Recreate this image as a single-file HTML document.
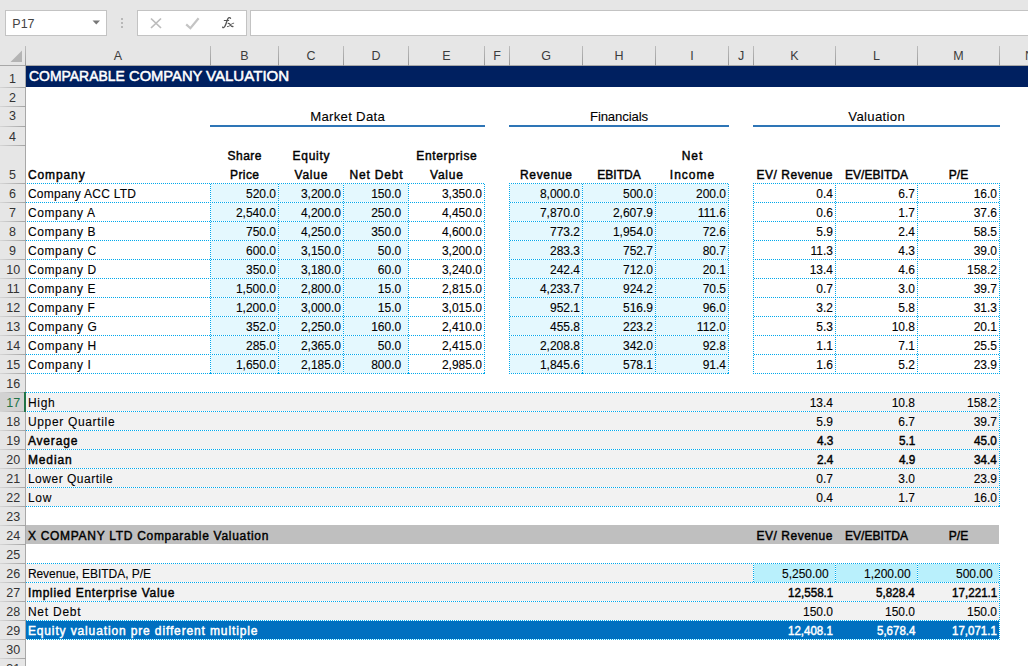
<!DOCTYPE html>
<html lang="en"><head><meta charset="utf-8"><title>Comparable Company Valuation</title>
<style>
html,body{margin:0;padding:0;background:#fff}
body{width:1028px;height:666px;overflow:hidden;position:relative;font-family:"Liberation Sans",sans-serif}
#root{position:absolute;left:0;top:0;width:1028px;height:666px;overflow:hidden}
</style></head><body><div id="root">
<div style="position:absolute;left:0px;top:0px;width:1028px;height:66px;background:#e6e6e6"></div>
<div style="position:absolute;left:5px;top:10px;width:100px;height:24px;background:#fff;border:1px solid #c3c3c3"></div>
<div style="position:absolute;left:137px;top:10px;width:108px;height:24px;background:#fff;border:1px solid #c3c3c3"></div>
<div style="position:absolute;left:250px;top:10px;width:800px;height:24px;background:#fff;border:1px solid #c3c3c3"></div>
<svg style="position:absolute;left:92px;top:20px" width="9" height="6" viewBox="0 0 9 6"><path d="M0.5 0.5 L8 0.5 L4.25 4.6 Z" fill="#777"/></svg>
<div style="position:absolute;left:121px;top:18px;width:2px;height:2px;background:#b8b8b8"></div>
<div style="position:absolute;left:121px;top:22px;width:2px;height:2px;background:#b8b8b8"></div>
<div style="position:absolute;left:121px;top:26px;width:2px;height:2px;background:#b8b8b8"></div>
<svg style="position:absolute;left:150px;top:17px" width="13" height="13" viewBox="0 0 13 13"><path d="M1 1.5 L11 11 M11 1.5 L1 11" stroke="#bcbcbc" stroke-width="1.7" fill="none"/></svg>
<svg style="position:absolute;left:185px;top:17px" width="15" height="13" viewBox="0 0 15 13"><path d="M1.2 7.4 L5.4 11.2 L13.6 1.2" stroke="#c4c4c4" stroke-width="2.2" fill="none"/></svg>
<svg style="position:absolute;left:215px;top:12px" width="25" height="21" viewBox="0 0 25 21"><g fill="none" stroke="#555" stroke-linecap="round"><path d="M15.5 6.3 C15.1 5.4 13.7 5.3 13.0 6.5 C12.3 7.7 11.8 9.4 10.6 12.8 C10.0 14.5 9.4 15.4 8.6 15.6 C8.1 15.7 7.8 15.5 7.7 15.2" stroke-width="1.35"/><path d="M9.3 8.4 L13.7 8.4" stroke-width="1.05"/><path d="M13.3 11.4 C14.4 11.3 14.9 11.9 15.5 13 C16.1 14.1 16.6 14.7 17.9 14.5" stroke-width="1.3"/><path d="M18.7 11.2 C17.6 11.2 16.6 12 15.5 13 C14.4 14 13.6 14.7 12.4 14.6" stroke-width="0.9"/></g></svg>
<div style="position:absolute;left:0px;top:65px;width:1028px;height:1px;background:#a8a8a8"></div>
<div style="position:absolute;left:25px;top:46px;width:1px;height:20px;background:linear-gradient(180deg,#bdbdbd,#999)"></div>
<div style="position:absolute;left:210px;top:46px;width:1px;height:20px;background:linear-gradient(180deg,#bdbdbd,#999)"></div>
<div style="position:absolute;left:278px;top:46px;width:1px;height:20px;background:linear-gradient(180deg,#bdbdbd,#999)"></div>
<div style="position:absolute;left:343px;top:46px;width:1px;height:20px;background:linear-gradient(180deg,#bdbdbd,#999)"></div>
<div style="position:absolute;left:408px;top:46px;width:1px;height:20px;background:linear-gradient(180deg,#bdbdbd,#999)"></div>
<div style="position:absolute;left:484px;top:46px;width:1px;height:20px;background:linear-gradient(180deg,#bdbdbd,#999)"></div>
<div style="position:absolute;left:509px;top:46px;width:1px;height:20px;background:linear-gradient(180deg,#bdbdbd,#999)"></div>
<div style="position:absolute;left:582px;top:46px;width:1px;height:20px;background:linear-gradient(180deg,#bdbdbd,#999)"></div>
<div style="position:absolute;left:655px;top:46px;width:1px;height:20px;background:linear-gradient(180deg,#bdbdbd,#999)"></div>
<div style="position:absolute;left:728px;top:46px;width:1px;height:20px;background:linear-gradient(180deg,#bdbdbd,#999)"></div>
<div style="position:absolute;left:753px;top:46px;width:1px;height:20px;background:linear-gradient(180deg,#bdbdbd,#999)"></div>
<div style="position:absolute;left:835px;top:46px;width:1px;height:20px;background:linear-gradient(180deg,#bdbdbd,#999)"></div>
<div style="position:absolute;left:917px;top:46px;width:1px;height:20px;background:linear-gradient(180deg,#bdbdbd,#999)"></div>
<div style="position:absolute;left:999px;top:46px;width:1px;height:20px;background:linear-gradient(180deg,#bdbdbd,#999)"></div>
<svg style="position:absolute;left:9px;top:49px" width="14" height="14" viewBox="0 0 14 14"><path d="M13 1.5 L13 13 L1.5 13 Z" fill="#b4b4b4"/></svg>
<div style="position:absolute;left:0px;top:66px;width:26px;height:600px;background:#e6e6e6"></div>
<div style="position:absolute;left:25px;top:66px;width:1px;height:600px;background:#a8a8a8"></div>
<div style="position:absolute;left:0;top:87px;width:26px;height:1px;background:linear-gradient(90deg,#d6d6d6,#a2a2a2)"></div>
<div style="position:absolute;left:0;top:106px;width:26px;height:1px;background:linear-gradient(90deg,#d6d6d6,#a2a2a2)"></div>
<div style="position:absolute;left:0;top:126px;width:26px;height:1px;background:linear-gradient(90deg,#d6d6d6,#a2a2a2)"></div>
<div style="position:absolute;left:0;top:145px;width:26px;height:1px;background:linear-gradient(90deg,#d6d6d6,#a2a2a2)"></div>
<div style="position:absolute;left:0;top:183px;width:26px;height:1px;background:linear-gradient(90deg,#d6d6d6,#a2a2a2)"></div>
<div style="position:absolute;left:0;top:202px;width:26px;height:1px;background:linear-gradient(90deg,#d6d6d6,#a2a2a2)"></div>
<div style="position:absolute;left:0;top:221px;width:26px;height:1px;background:linear-gradient(90deg,#d6d6d6,#a2a2a2)"></div>
<div style="position:absolute;left:0;top:240px;width:26px;height:1px;background:linear-gradient(90deg,#d6d6d6,#a2a2a2)"></div>
<div style="position:absolute;left:0;top:259px;width:26px;height:1px;background:linear-gradient(90deg,#d6d6d6,#a2a2a2)"></div>
<div style="position:absolute;left:0;top:278px;width:26px;height:1px;background:linear-gradient(90deg,#d6d6d6,#a2a2a2)"></div>
<div style="position:absolute;left:0;top:297px;width:26px;height:1px;background:linear-gradient(90deg,#d6d6d6,#a2a2a2)"></div>
<div style="position:absolute;left:0;top:316px;width:26px;height:1px;background:linear-gradient(90deg,#d6d6d6,#a2a2a2)"></div>
<div style="position:absolute;left:0;top:335px;width:26px;height:1px;background:linear-gradient(90deg,#d6d6d6,#a2a2a2)"></div>
<div style="position:absolute;left:0;top:354px;width:26px;height:1px;background:linear-gradient(90deg,#d6d6d6,#a2a2a2)"></div>
<div style="position:absolute;left:0;top:373px;width:26px;height:1px;background:linear-gradient(90deg,#d6d6d6,#a2a2a2)"></div>
<div style="position:absolute;left:0;top:392px;width:26px;height:1px;background:linear-gradient(90deg,#d6d6d6,#a2a2a2)"></div>
<div style="position:absolute;left:0;top:411px;width:26px;height:1px;background:linear-gradient(90deg,#d6d6d6,#a2a2a2)"></div>
<div style="position:absolute;left:0;top:430px;width:26px;height:1px;background:linear-gradient(90deg,#d6d6d6,#a2a2a2)"></div>
<div style="position:absolute;left:0;top:449px;width:26px;height:1px;background:linear-gradient(90deg,#d6d6d6,#a2a2a2)"></div>
<div style="position:absolute;left:0;top:468px;width:26px;height:1px;background:linear-gradient(90deg,#d6d6d6,#a2a2a2)"></div>
<div style="position:absolute;left:0;top:487px;width:26px;height:1px;background:linear-gradient(90deg,#d6d6d6,#a2a2a2)"></div>
<div style="position:absolute;left:0;top:506px;width:26px;height:1px;background:linear-gradient(90deg,#d6d6d6,#a2a2a2)"></div>
<div style="position:absolute;left:0;top:525px;width:26px;height:1px;background:linear-gradient(90deg,#d6d6d6,#a2a2a2)"></div>
<div style="position:absolute;left:0;top:544px;width:26px;height:1px;background:linear-gradient(90deg,#d6d6d6,#a2a2a2)"></div>
<div style="position:absolute;left:0;top:563px;width:26px;height:1px;background:linear-gradient(90deg,#d6d6d6,#a2a2a2)"></div>
<div style="position:absolute;left:0;top:582px;width:26px;height:1px;background:linear-gradient(90deg,#d6d6d6,#a2a2a2)"></div>
<div style="position:absolute;left:0;top:601px;width:26px;height:1px;background:linear-gradient(90deg,#d6d6d6,#a2a2a2)"></div>
<div style="position:absolute;left:0;top:620px;width:26px;height:1px;background:linear-gradient(90deg,#d6d6d6,#a2a2a2)"></div>
<div style="position:absolute;left:0;top:639px;width:26px;height:1px;background:linear-gradient(90deg,#d6d6d6,#a2a2a2)"></div>
<div style="position:absolute;left:0;top:658px;width:26px;height:1px;background:linear-gradient(90deg,#d6d6d6,#a2a2a2)"></div>
<div style="position:absolute;left:0px;top:393px;width:24px;height:18px;background:#d2d2d2"></div>
<div style="position:absolute;left:24px;top:392px;width:2px;height:20px;background:#217346"></div>
<div style="position:absolute;left:26px;top:66px;width:1002px;height:600px;background:#fff"></div>
<div style="position:absolute;left:26px;top:66px;width:1002px;height:21px;background:#002060"></div>
<div style="position:absolute;left:210px;top:125px;width:275px;height:2px;background:#2e75b6"></div>
<div style="position:absolute;left:509px;top:125px;width:220px;height:2px;background:#2e75b6"></div>
<div style="position:absolute;left:753px;top:125px;width:247px;height:2px;background:#2e75b6"></div>
<div style="position:absolute;left:210px;top:183px;width:198px;height:190px;background:#e4f8fe"></div>
<div style="position:absolute;left:509px;top:183px;width:219px;height:190px;background:#e4f8fe"></div>
<div style="position:absolute;left:26px;top:183px;width:459px;height:1px;background:repeating-linear-gradient(90deg,#00a8ec 0 1px,#fff 1px 2px);background-position:-1px 0"></div>
<div style="position:absolute;left:509px;top:183px;width:220px;height:1px;background:repeating-linear-gradient(90deg,#00a8ec 0 1px,#fff 1px 2px);background-position:0px 0"></div>
<div style="position:absolute;left:753px;top:183px;width:247px;height:1px;background:repeating-linear-gradient(90deg,#00a8ec 0 1px,#fff 1px 2px);background-position:0px 0"></div>
<div style="position:absolute;left:26px;top:202px;width:459px;height:1px;background:repeating-linear-gradient(90deg,#00a8ec 0 1px,#fff 1px 2px);background-position:0px 0"></div>
<div style="position:absolute;left:509px;top:202px;width:220px;height:1px;background:repeating-linear-gradient(90deg,#00a8ec 0 1px,#fff 1px 2px);background-position:-1px 0"></div>
<div style="position:absolute;left:753px;top:202px;width:247px;height:1px;background:repeating-linear-gradient(90deg,#00a8ec 0 1px,#fff 1px 2px);background-position:-1px 0"></div>
<div style="position:absolute;left:26px;top:221px;width:459px;height:1px;background:repeating-linear-gradient(90deg,#00a8ec 0 1px,#fff 1px 2px);background-position:-1px 0"></div>
<div style="position:absolute;left:509px;top:221px;width:220px;height:1px;background:repeating-linear-gradient(90deg,#00a8ec 0 1px,#fff 1px 2px);background-position:0px 0"></div>
<div style="position:absolute;left:753px;top:221px;width:247px;height:1px;background:repeating-linear-gradient(90deg,#00a8ec 0 1px,#fff 1px 2px);background-position:0px 0"></div>
<div style="position:absolute;left:26px;top:240px;width:459px;height:1px;background:repeating-linear-gradient(90deg,#00a8ec 0 1px,#fff 1px 2px);background-position:0px 0"></div>
<div style="position:absolute;left:509px;top:240px;width:220px;height:1px;background:repeating-linear-gradient(90deg,#00a8ec 0 1px,#fff 1px 2px);background-position:-1px 0"></div>
<div style="position:absolute;left:753px;top:240px;width:247px;height:1px;background:repeating-linear-gradient(90deg,#00a8ec 0 1px,#fff 1px 2px);background-position:-1px 0"></div>
<div style="position:absolute;left:26px;top:259px;width:459px;height:1px;background:repeating-linear-gradient(90deg,#00a8ec 0 1px,#fff 1px 2px);background-position:-1px 0"></div>
<div style="position:absolute;left:509px;top:259px;width:220px;height:1px;background:repeating-linear-gradient(90deg,#00a8ec 0 1px,#fff 1px 2px);background-position:0px 0"></div>
<div style="position:absolute;left:753px;top:259px;width:247px;height:1px;background:repeating-linear-gradient(90deg,#00a8ec 0 1px,#fff 1px 2px);background-position:0px 0"></div>
<div style="position:absolute;left:26px;top:278px;width:459px;height:1px;background:repeating-linear-gradient(90deg,#00a8ec 0 1px,#fff 1px 2px);background-position:0px 0"></div>
<div style="position:absolute;left:509px;top:278px;width:220px;height:1px;background:repeating-linear-gradient(90deg,#00a8ec 0 1px,#fff 1px 2px);background-position:-1px 0"></div>
<div style="position:absolute;left:753px;top:278px;width:247px;height:1px;background:repeating-linear-gradient(90deg,#00a8ec 0 1px,#fff 1px 2px);background-position:-1px 0"></div>
<div style="position:absolute;left:26px;top:297px;width:459px;height:1px;background:repeating-linear-gradient(90deg,#00a8ec 0 1px,#fff 1px 2px);background-position:-1px 0"></div>
<div style="position:absolute;left:509px;top:297px;width:220px;height:1px;background:repeating-linear-gradient(90deg,#00a8ec 0 1px,#fff 1px 2px);background-position:0px 0"></div>
<div style="position:absolute;left:753px;top:297px;width:247px;height:1px;background:repeating-linear-gradient(90deg,#00a8ec 0 1px,#fff 1px 2px);background-position:0px 0"></div>
<div style="position:absolute;left:26px;top:316px;width:459px;height:1px;background:repeating-linear-gradient(90deg,#00a8ec 0 1px,#fff 1px 2px);background-position:0px 0"></div>
<div style="position:absolute;left:509px;top:316px;width:220px;height:1px;background:repeating-linear-gradient(90deg,#00a8ec 0 1px,#fff 1px 2px);background-position:-1px 0"></div>
<div style="position:absolute;left:753px;top:316px;width:247px;height:1px;background:repeating-linear-gradient(90deg,#00a8ec 0 1px,#fff 1px 2px);background-position:-1px 0"></div>
<div style="position:absolute;left:26px;top:335px;width:459px;height:1px;background:repeating-linear-gradient(90deg,#00a8ec 0 1px,#fff 1px 2px);background-position:-1px 0"></div>
<div style="position:absolute;left:509px;top:335px;width:220px;height:1px;background:repeating-linear-gradient(90deg,#00a8ec 0 1px,#fff 1px 2px);background-position:0px 0"></div>
<div style="position:absolute;left:753px;top:335px;width:247px;height:1px;background:repeating-linear-gradient(90deg,#00a8ec 0 1px,#fff 1px 2px);background-position:0px 0"></div>
<div style="position:absolute;left:26px;top:354px;width:459px;height:1px;background:repeating-linear-gradient(90deg,#00a8ec 0 1px,#fff 1px 2px);background-position:0px 0"></div>
<div style="position:absolute;left:509px;top:354px;width:220px;height:1px;background:repeating-linear-gradient(90deg,#00a8ec 0 1px,#fff 1px 2px);background-position:-1px 0"></div>
<div style="position:absolute;left:753px;top:354px;width:247px;height:1px;background:repeating-linear-gradient(90deg,#00a8ec 0 1px,#fff 1px 2px);background-position:-1px 0"></div>
<div style="position:absolute;left:26px;top:373px;width:459px;height:1px;background:repeating-linear-gradient(90deg,#00a8ec 0 1px,#fff 1px 2px);background-position:-1px 0"></div>
<div style="position:absolute;left:509px;top:373px;width:220px;height:1px;background:repeating-linear-gradient(90deg,#00a8ec 0 1px,#fff 1px 2px);background-position:0px 0"></div>
<div style="position:absolute;left:753px;top:373px;width:247px;height:1px;background:repeating-linear-gradient(90deg,#00a8ec 0 1px,#fff 1px 2px);background-position:0px 0"></div>
<div style="position:absolute;left:210px;top:183px;width:1px;height:191px;background:repeating-linear-gradient(180deg,#00a8ec 0 1px,#fff 1px 2px);background-position:0 -1px"></div>
<div style="position:absolute;left:278px;top:183px;width:1px;height:191px;background:repeating-linear-gradient(180deg,#00a8ec 0 1px,#fff 1px 2px);background-position:0 -1px"></div>
<div style="position:absolute;left:343px;top:183px;width:1px;height:191px;background:repeating-linear-gradient(180deg,#00a8ec 0 1px,#fff 1px 2px);background-position:0 0px"></div>
<div style="position:absolute;left:408px;top:183px;width:1px;height:191px;background:repeating-linear-gradient(180deg,#00a8ec 0 1px,#fff 1px 2px);background-position:0 -1px"></div>
<div style="position:absolute;left:484px;top:183px;width:1px;height:191px;background:repeating-linear-gradient(180deg,#00a8ec 0 1px,#fff 1px 2px);background-position:0 -1px"></div>
<div style="position:absolute;left:509px;top:183px;width:1px;height:191px;background:repeating-linear-gradient(180deg,#00a8ec 0 1px,#fff 1px 2px);background-position:0 0px"></div>
<div style="position:absolute;left:582px;top:183px;width:1px;height:191px;background:repeating-linear-gradient(180deg,#00a8ec 0 1px,#fff 1px 2px);background-position:0 -1px"></div>
<div style="position:absolute;left:655px;top:183px;width:1px;height:191px;background:repeating-linear-gradient(180deg,#00a8ec 0 1px,#fff 1px 2px);background-position:0 0px"></div>
<div style="position:absolute;left:728px;top:183px;width:1px;height:191px;background:repeating-linear-gradient(180deg,#00a8ec 0 1px,#fff 1px 2px);background-position:0 -1px"></div>
<div style="position:absolute;left:753px;top:183px;width:1px;height:191px;background:repeating-linear-gradient(180deg,#00a8ec 0 1px,#fff 1px 2px);background-position:0 0px"></div>
<div style="position:absolute;left:835px;top:183px;width:1px;height:191px;background:repeating-linear-gradient(180deg,#00a8ec 0 1px,#fff 1px 2px);background-position:0 0px"></div>
<div style="position:absolute;left:917px;top:183px;width:1px;height:191px;background:repeating-linear-gradient(180deg,#00a8ec 0 1px,#fff 1px 2px);background-position:0 0px"></div>
<div style="position:absolute;left:999px;top:183px;width:1px;height:191px;background:repeating-linear-gradient(180deg,#00a8ec 0 1px,#fff 1px 2px);background-position:0 0px"></div>
<div style="position:absolute;left:26px;top:392px;width:973px;height:114px;background:#f2f2f2"></div>
<div style="position:absolute;left:26px;top:392px;width:974px;height:1px;background:repeating-linear-gradient(90deg,#00a8ec 0 1px,#fff 1px 2px);background-position:0px 0"></div>
<div style="position:absolute;left:26px;top:411px;width:974px;height:1px;background:repeating-linear-gradient(90deg,#00a8ec 0 1px,#fff 1px 2px);background-position:-1px 0"></div>
<div style="position:absolute;left:26px;top:430px;width:974px;height:1px;background:repeating-linear-gradient(90deg,#00a8ec 0 1px,#fff 1px 2px);background-position:0px 0"></div>
<div style="position:absolute;left:26px;top:449px;width:974px;height:1px;background:repeating-linear-gradient(90deg,#00a8ec 0 1px,#fff 1px 2px);background-position:-1px 0"></div>
<div style="position:absolute;left:26px;top:468px;width:974px;height:1px;background:repeating-linear-gradient(90deg,#00a8ec 0 1px,#fff 1px 2px);background-position:0px 0"></div>
<div style="position:absolute;left:26px;top:487px;width:974px;height:1px;background:repeating-linear-gradient(90deg,#00a8ec 0 1px,#fff 1px 2px);background-position:-1px 0"></div>
<div style="position:absolute;left:26px;top:506px;width:974px;height:1px;background:repeating-linear-gradient(90deg,#00a8ec 0 1px,#fff 1px 2px);background-position:0px 0"></div>
<div style="position:absolute;left:999px;top:392px;width:1px;height:115px;background:repeating-linear-gradient(180deg,#00a8ec 0 1px,#fff 1px 2px);background-position:0 -1px"></div>
<div style="position:absolute;left:26px;top:525px;width:973px;height:19px;background:#bfbfbf"></div>
<div style="position:absolute;left:26px;top:563px;width:973px;height:57px;background:#f2f2f2"></div>
<div style="position:absolute;left:753px;top:563px;width:246px;height:19px;background:#b9f0fc"></div>
<div style="position:absolute;left:26px;top:620px;width:973px;height:19px;background:#0070c0"></div>
<div style="position:absolute;left:26px;top:563px;width:974px;height:1px;background:repeating-linear-gradient(90deg,#00a8ec 0 1px,#fff 1px 2px);background-position:-1px 0"></div>
<div style="position:absolute;left:26px;top:582px;width:974px;height:1px;background:repeating-linear-gradient(90deg,#00a8ec 0 1px,#fff 1px 2px);background-position:0px 0"></div>
<div style="position:absolute;left:26px;top:601px;width:974px;height:1px;background:repeating-linear-gradient(90deg,#00a8ec 0 1px,#fff 1px 2px);background-position:-1px 0"></div>
<div style="position:absolute;left:26px;top:620px;width:974px;height:1px;background:repeating-linear-gradient(90deg,#00a8ec 0 1px,#fff 1px 2px);background-position:0px 0"></div>
<div style="position:absolute;left:26px;top:639px;width:974px;height:1px;background:repeating-linear-gradient(90deg,#00a8ec 0 1px,#fff 1px 2px);background-position:-1px 0"></div>
<div style="position:absolute;left:999px;top:563px;width:1px;height:77px;background:repeating-linear-gradient(180deg,#00a8ec 0 1px,#fff 1px 2px);background-position:0 0px"></div>
<div style="position:absolute;left:753px;top:563px;width:1px;height:20px;background:repeating-linear-gradient(180deg,#00a8ec 0 1px,#fff 1px 2px);background-position:0 0px"></div>
<div style="position:absolute;left:835px;top:563px;width:1px;height:20px;background:repeating-linear-gradient(180deg,#00a8ec 0 1px,#fff 1px 2px);background-position:0 0px"></div>
<div style="position:absolute;left:917px;top:563px;width:1px;height:20px;background:repeating-linear-gradient(180deg,#00a8ec 0 1px,#fff 1px 2px);background-position:0 0px"></div>
<div style="font-family:'Liberation Sans',sans-serif;font-size:12.5px;white-space:pre;position:absolute;left:12.30px;top:13.87px;line-height:20px;color:#444;">P17</div>
<div style="font-family:'Liberation Sans',sans-serif;font-size:12.5px;white-space:pre;position:absolute;left:113.83px;top:46.17px;line-height:20px;color:#3c3c3c;">A</div>
<div style="font-family:'Liberation Sans',sans-serif;font-size:12.5px;white-space:pre;position:absolute;left:240.33px;top:46.17px;line-height:20px;color:#3c3c3c;">B</div>
<div style="font-family:'Liberation Sans',sans-serif;font-size:12.5px;white-space:pre;position:absolute;left:306.48px;top:46.17px;line-height:20px;color:#3c3c3c;">C</div>
<div style="font-family:'Liberation Sans',sans-serif;font-size:12.5px;white-space:pre;position:absolute;left:371.48px;top:46.17px;line-height:20px;color:#3c3c3c;">D</div>
<div style="font-family:'Liberation Sans',sans-serif;font-size:12.5px;white-space:pre;position:absolute;left:442.33px;top:46.17px;line-height:20px;color:#3c3c3c;">E</div>
<div style="font-family:'Liberation Sans',sans-serif;font-size:12.5px;white-space:pre;position:absolute;left:493.18px;top:46.17px;line-height:20px;color:#3c3c3c;">F</div>
<div style="font-family:'Liberation Sans',sans-serif;font-size:12.5px;white-space:pre;position:absolute;left:541.13px;top:46.17px;line-height:20px;color:#3c3c3c;">G</div>
<div style="font-family:'Liberation Sans',sans-serif;font-size:12.5px;white-space:pre;position:absolute;left:614.48px;top:46.17px;line-height:20px;color:#3c3c3c;">H</div>
<div style="font-family:'Liberation Sans',sans-serif;font-size:12.5px;white-space:pre;position:absolute;left:690.26px;top:46.17px;line-height:20px;color:#3c3c3c;">I</div>
<div style="font-family:'Liberation Sans',sans-serif;font-size:12.5px;white-space:pre;position:absolute;left:737.88px;top:46.17px;line-height:20px;color:#3c3c3c;">J</div>
<div style="font-family:'Liberation Sans',sans-serif;font-size:12.5px;white-space:pre;position:absolute;left:790.33px;top:46.17px;line-height:20px;color:#3c3c3c;">K</div>
<div style="font-family:'Liberation Sans',sans-serif;font-size:12.5px;white-space:pre;position:absolute;left:873.02px;top:46.17px;line-height:20px;color:#3c3c3c;">L</div>
<div style="font-family:'Liberation Sans',sans-serif;font-size:12.5px;white-space:pre;position:absolute;left:953.29px;top:46.17px;line-height:20px;color:#3c3c3c;">M</div>
<div style="font-family:'Liberation Sans',sans-serif;font-size:12.5px;white-space:pre;position:absolute;left:1024.98px;top:46.17px;line-height:20px;color:#3c3c3c;">N</div>
<div style="font-family:'Liberation Sans',sans-serif;font-size:12.5px;white-space:pre;position:absolute;left:8.92px;top:69.07px;line-height:20px;color:#333;">1</div>
<div style="font-family:'Liberation Sans',sans-serif;font-size:12.5px;white-space:pre;position:absolute;left:8.92px;top:88.07px;line-height:20px;color:#333;">2</div>
<div style="font-family:'Liberation Sans',sans-serif;font-size:12.5px;white-space:pre;position:absolute;left:8.92px;top:106.27px;line-height:20px;color:#333;">3</div>
<div style="font-family:'Liberation Sans',sans-serif;font-size:12.5px;white-space:pre;position:absolute;left:8.92px;top:127.07px;line-height:20px;color:#333;">4</div>
<div style="font-family:'Liberation Sans',sans-serif;font-size:12.5px;white-space:pre;position:absolute;left:8.92px;top:165.07px;line-height:20px;color:#333;">5</div>
<div style="font-family:'Liberation Sans',sans-serif;font-size:12.5px;white-space:pre;position:absolute;left:8.92px;top:184.07px;line-height:20px;color:#333;">6</div>
<div style="font-family:'Liberation Sans',sans-serif;font-size:12.5px;white-space:pre;position:absolute;left:8.92px;top:203.07px;line-height:20px;color:#333;">7</div>
<div style="font-family:'Liberation Sans',sans-serif;font-size:12.5px;white-space:pre;position:absolute;left:8.92px;top:222.07px;line-height:20px;color:#333;">8</div>
<div style="font-family:'Liberation Sans',sans-serif;font-size:12.5px;white-space:pre;position:absolute;left:8.92px;top:241.07px;line-height:20px;color:#333;">9</div>
<div style="font-family:'Liberation Sans',sans-serif;font-size:12.5px;white-space:pre;position:absolute;left:6.35px;top:260.07px;line-height:20px;color:#333;">10</div>
<div style="font-family:'Liberation Sans',sans-serif;font-size:12.5px;white-space:pre;position:absolute;left:6.81px;top:279.07px;line-height:20px;color:#333;">11</div>
<div style="font-family:'Liberation Sans',sans-serif;font-size:12.5px;white-space:pre;position:absolute;left:6.35px;top:298.07px;line-height:20px;color:#333;">12</div>
<div style="font-family:'Liberation Sans',sans-serif;font-size:12.5px;white-space:pre;position:absolute;left:6.35px;top:317.07px;line-height:20px;color:#333;">13</div>
<div style="font-family:'Liberation Sans',sans-serif;font-size:12.5px;white-space:pre;position:absolute;left:6.35px;top:336.07px;line-height:20px;color:#333;">14</div>
<div style="font-family:'Liberation Sans',sans-serif;font-size:12.5px;white-space:pre;position:absolute;left:6.35px;top:355.07px;line-height:20px;color:#333;">15</div>
<div style="font-family:'Liberation Sans',sans-serif;font-size:12.5px;white-space:pre;position:absolute;left:6.35px;top:374.07px;line-height:20px;color:#333;">16</div>
<div style="font-family:'Liberation Sans',sans-serif;font-size:12.5px;white-space:pre;position:absolute;left:6.35px;top:393.07px;line-height:20px;color:#217346;">17</div>
<div style="font-family:'Liberation Sans',sans-serif;font-size:12.5px;white-space:pre;position:absolute;left:6.35px;top:412.07px;line-height:20px;color:#333;">18</div>
<div style="font-family:'Liberation Sans',sans-serif;font-size:12.5px;white-space:pre;position:absolute;left:6.35px;top:431.07px;line-height:20px;color:#333;">19</div>
<div style="font-family:'Liberation Sans',sans-serif;font-size:12.5px;white-space:pre;position:absolute;left:6.35px;top:450.07px;line-height:20px;color:#333;">20</div>
<div style="font-family:'Liberation Sans',sans-serif;font-size:12.5px;white-space:pre;position:absolute;left:6.35px;top:469.07px;line-height:20px;color:#333;">21</div>
<div style="font-family:'Liberation Sans',sans-serif;font-size:12.5px;white-space:pre;position:absolute;left:6.35px;top:488.07px;line-height:20px;color:#333;">22</div>
<div style="font-family:'Liberation Sans',sans-serif;font-size:12.5px;white-space:pre;position:absolute;left:6.35px;top:507.07px;line-height:20px;color:#333;">23</div>
<div style="font-family:'Liberation Sans',sans-serif;font-size:12.5px;white-space:pre;position:absolute;left:6.35px;top:526.07px;line-height:20px;color:#333;">24</div>
<div style="font-family:'Liberation Sans',sans-serif;font-size:12.5px;white-space:pre;position:absolute;left:6.35px;top:545.07px;line-height:20px;color:#333;">25</div>
<div style="font-family:'Liberation Sans',sans-serif;font-size:12.5px;white-space:pre;position:absolute;left:6.35px;top:564.07px;line-height:20px;color:#333;">26</div>
<div style="font-family:'Liberation Sans',sans-serif;font-size:12.5px;white-space:pre;position:absolute;left:6.35px;top:583.07px;line-height:20px;color:#333;">27</div>
<div style="font-family:'Liberation Sans',sans-serif;font-size:12.5px;white-space:pre;position:absolute;left:6.35px;top:602.07px;line-height:20px;color:#333;">28</div>
<div style="font-family:'Liberation Sans',sans-serif;font-size:12.5px;white-space:pre;position:absolute;left:6.35px;top:621.07px;line-height:20px;color:#333;">29</div>
<div style="font-family:'Liberation Sans',sans-serif;font-size:12.5px;white-space:pre;position:absolute;left:6.35px;top:640.07px;line-height:20px;color:#333;">30</div>
<div style="font-family:'Liberation Sans',sans-serif;font-size:12.5px;white-space:pre;position:absolute;left:6.35px;top:659.07px;line-height:20px;color:#333;">31</div>
<div style="font-family:'Liberation Sans',sans-serif;font-size:14.5px;white-space:pre;position:absolute;left:29.20px;top:66.48px;line-height:20px;color:#fff;transform:scaleX(0.9613);transform-origin:0 0;-webkit-text-stroke:0.5px #fff;">COMPARABLE</div>
<div style="font-family:'Liberation Sans',sans-serif;font-size:14.5px;white-space:pre;position:absolute;left:128.80px;top:66.48px;line-height:20px;color:#fff;transform:scaleX(1.0159);transform-origin:0 0;-webkit-text-stroke:0.5px #fff;">COMPANY</div>
<div style="font-family:'Liberation Sans',sans-serif;font-size:14.5px;white-space:pre;position:absolute;left:206.20px;top:66.48px;line-height:20px;color:#fff;transform:scaleX(1.0394);transform-origin:0 0;-webkit-text-stroke:0.5px #fff;">VALUATION</div>
<div style="font-family:'Liberation Sans',sans-serif;font-size:13.2px;white-space:pre;position:absolute;left:310.14px;top:106.63px;line-height:20px;color:#000;letter-spacing:0.288px;-webkit-text-stroke:0.1px #000;">Market Data</div>
<div style="font-family:'Liberation Sans',sans-serif;font-size:13.2px;white-space:pre;position:absolute;left:589.98px;top:106.63px;line-height:20px;color:#000;letter-spacing:-0.148px;-webkit-text-stroke:0.1px #000;">Financials</div>
<div style="font-family:'Liberation Sans',sans-serif;font-size:13.2px;white-space:pre;position:absolute;left:848.25px;top:106.63px;line-height:20px;color:#000;letter-spacing:0.309px;-webkit-text-stroke:0.1px #000;">Valuation</div>
<div style="font-family:'Liberation Sans',sans-serif;font-size:12.0px;white-space:pre;position:absolute;left:27.90px;top:165.34px;line-height:20px;color:#000;letter-spacing:0.906px;-webkit-text-stroke:0.42px #000;">Company</div>
<div style="font-family:'Liberation Sans',sans-serif;font-size:12.0px;white-space:pre;position:absolute;left:227.46px;top:146.34px;line-height:20px;color:#000;letter-spacing:0.514px;-webkit-text-stroke:0.42px #000;">Share</div>
<div style="font-family:'Liberation Sans',sans-serif;font-size:12.0px;white-space:pre;position:absolute;left:230.05px;top:165.34px;line-height:20px;color:#000;letter-spacing:0.391px;-webkit-text-stroke:0.42px #000;">Price</div>
<div style="font-family:'Liberation Sans',sans-serif;font-size:12.0px;white-space:pre;position:absolute;left:292.47px;top:146.34px;line-height:20px;color:#000;letter-spacing:0.740px;-webkit-text-stroke:0.42px #000;">Equity</div>
<div style="font-family:'Liberation Sans',sans-serif;font-size:12.0px;white-space:pre;position:absolute;left:294.54px;top:165.34px;line-height:20px;color:#000;letter-spacing:0.778px;-webkit-text-stroke:0.42px #000;">Value</div>
<div style="font-family:'Liberation Sans',sans-serif;font-size:12.0px;white-space:pre;position:absolute;left:349.42px;top:165.34px;line-height:20px;color:#000;letter-spacing:0.830px;-webkit-text-stroke:0.42px #000;">Net Debt</div>
<div style="font-family:'Liberation Sans',sans-serif;font-size:12.0px;white-space:pre;position:absolute;left:416.27px;top:146.34px;line-height:20px;color:#000;letter-spacing:0.640px;-webkit-text-stroke:0.42px #000;">Enterprise</div>
<div style="font-family:'Liberation Sans',sans-serif;font-size:12.0px;white-space:pre;position:absolute;left:430.04px;top:165.34px;line-height:20px;color:#000;letter-spacing:0.778px;-webkit-text-stroke:0.42px #000;">Value</div>
<div style="font-family:'Liberation Sans',sans-serif;font-size:12.0px;white-space:pre;position:absolute;left:519.94px;top:165.34px;line-height:20px;color:#000;letter-spacing:0.679px;-webkit-text-stroke:0.42px #000;">Revenue</div>
<div style="font-family:'Liberation Sans',sans-serif;font-size:12.0px;white-space:pre;position:absolute;left:597.26px;top:165.34px;line-height:20px;color:#000;letter-spacing:0.026px;-webkit-text-stroke:0.42px #000;">EBITDA</div>
<div style="font-family:'Liberation Sans',sans-serif;font-size:12.0px;white-space:pre;position:absolute;left:681.65px;top:146.34px;line-height:20px;color:#000;letter-spacing:1.004px;-webkit-text-stroke:0.42px #000;">Net</div>
<div style="font-family:'Liberation Sans',sans-serif;font-size:12.0px;white-space:pre;position:absolute;left:669.85px;top:165.34px;line-height:20px;color:#000;letter-spacing:0.990px;-webkit-text-stroke:0.42px #000;">Income</div>
<div style="font-family:'Liberation Sans',sans-serif;font-size:12.0px;white-space:pre;position:absolute;left:756.60px;top:165.34px;line-height:20px;color:#000;letter-spacing:0.507px;-webkit-text-stroke:0.42px #000;">EV/ Revenue</div>
<div style="font-family:'Liberation Sans',sans-serif;font-size:12.0px;white-space:pre;position:absolute;left:844.88px;top:165.34px;line-height:20px;color:#000;letter-spacing:0.068px;-webkit-text-stroke:0.42px #000;">EV/EBITDA</div>
<div style="font-family:'Liberation Sans',sans-serif;font-size:12.0px;white-space:pre;position:absolute;left:948.68px;top:165.34px;line-height:20px;color:#000;letter-spacing:0.152px;-webkit-text-stroke:0.42px #000;">P/E</div>
<div style="font-family:'Liberation Sans',sans-serif;font-size:12.0px;white-space:pre;position:absolute;left:27.90px;top:184.34px;line-height:20px;color:#000;letter-spacing:0.260px;-webkit-text-stroke:0.1px #000;">Company ACC LTD</div>
<div style="font-family:'Liberation Sans',sans-serif;font-size:12.0px;white-space:pre;position:absolute;left:245.97px;top:184.34px;line-height:20px;color:#000;-webkit-text-stroke:0.1px #000;">520.0</div>
<div style="font-family:'Liberation Sans',sans-serif;font-size:12.0px;white-space:pre;position:absolute;left:300.95px;top:184.34px;line-height:20px;color:#000;-webkit-text-stroke:0.1px #000;">3,200.0</div>
<div style="font-family:'Liberation Sans',sans-serif;font-size:12.0px;white-space:pre;position:absolute;left:371.17px;top:184.34px;line-height:20px;color:#000;-webkit-text-stroke:0.1px #000;">150.0</div>
<div style="font-family:'Liberation Sans',sans-serif;font-size:12.0px;white-space:pre;position:absolute;left:441.95px;top:184.34px;line-height:20px;color:#000;-webkit-text-stroke:0.1px #000;">3,350.0</div>
<div style="font-family:'Liberation Sans',sans-serif;font-size:12.0px;white-space:pre;position:absolute;left:539.95px;top:184.34px;line-height:20px;color:#000;-webkit-text-stroke:0.1px #000;">8,000.0</div>
<div style="font-family:'Liberation Sans',sans-serif;font-size:12.0px;white-space:pre;position:absolute;left:622.97px;top:184.34px;line-height:20px;color:#000;-webkit-text-stroke:0.1px #000;">500.0</div>
<div style="font-family:'Liberation Sans',sans-serif;font-size:12.0px;white-space:pre;position:absolute;left:695.97px;top:184.34px;line-height:20px;color:#000;-webkit-text-stroke:0.1px #000;">200.0</div>
<div style="font-family:'Liberation Sans',sans-serif;font-size:12.0px;white-space:pre;position:absolute;left:816.31px;top:184.34px;line-height:20px;color:#000;-webkit-text-stroke:0.1px #000;">0.4</div>
<div style="font-family:'Liberation Sans',sans-serif;font-size:12.0px;white-space:pre;position:absolute;left:898.31px;top:184.34px;line-height:20px;color:#000;-webkit-text-stroke:0.1px #000;">6.7</div>
<div style="font-family:'Liberation Sans',sans-serif;font-size:12.0px;white-space:pre;position:absolute;left:973.64px;top:184.34px;line-height:20px;color:#000;-webkit-text-stroke:0.1px #000;">16.0</div>
<div style="font-family:'Liberation Sans',sans-serif;font-size:12.0px;white-space:pre;position:absolute;left:27.90px;top:203.34px;line-height:20px;color:#000;letter-spacing:0.620px;-webkit-text-stroke:0.1px #000;">Company A</div>
<div style="font-family:'Liberation Sans',sans-serif;font-size:12.0px;white-space:pre;position:absolute;left:235.95px;top:203.34px;line-height:20px;color:#000;-webkit-text-stroke:0.1px #000;">2,540.0</div>
<div style="font-family:'Liberation Sans',sans-serif;font-size:12.0px;white-space:pre;position:absolute;left:300.95px;top:203.34px;line-height:20px;color:#000;-webkit-text-stroke:0.1px #000;">4,200.0</div>
<div style="font-family:'Liberation Sans',sans-serif;font-size:12.0px;white-space:pre;position:absolute;left:371.17px;top:203.34px;line-height:20px;color:#000;-webkit-text-stroke:0.1px #000;">250.0</div>
<div style="font-family:'Liberation Sans',sans-serif;font-size:12.0px;white-space:pre;position:absolute;left:441.95px;top:203.34px;line-height:20px;color:#000;-webkit-text-stroke:0.1px #000;">4,450.0</div>
<div style="font-family:'Liberation Sans',sans-serif;font-size:12.0px;white-space:pre;position:absolute;left:539.95px;top:203.34px;line-height:20px;color:#000;-webkit-text-stroke:0.1px #000;">7,870.0</div>
<div style="font-family:'Liberation Sans',sans-serif;font-size:12.0px;white-space:pre;position:absolute;left:612.95px;top:203.34px;line-height:20px;color:#000;-webkit-text-stroke:0.1px #000;">2,607.9</div>
<div style="font-family:'Liberation Sans',sans-serif;font-size:12.0px;white-space:pre;position:absolute;left:697.75px;top:203.34px;line-height:20px;color:#000;-webkit-text-stroke:0.1px #000;">111.6</div>
<div style="font-family:'Liberation Sans',sans-serif;font-size:12.0px;white-space:pre;position:absolute;left:816.31px;top:203.34px;line-height:20px;color:#000;-webkit-text-stroke:0.1px #000;">0.6</div>
<div style="font-family:'Liberation Sans',sans-serif;font-size:12.0px;white-space:pre;position:absolute;left:898.31px;top:203.34px;line-height:20px;color:#000;-webkit-text-stroke:0.1px #000;">1.7</div>
<div style="font-family:'Liberation Sans',sans-serif;font-size:12.0px;white-space:pre;position:absolute;left:973.64px;top:203.34px;line-height:20px;color:#000;-webkit-text-stroke:0.1px #000;">37.6</div>
<div style="font-family:'Liberation Sans',sans-serif;font-size:12.0px;white-space:pre;position:absolute;left:27.90px;top:222.34px;line-height:20px;color:#000;letter-spacing:0.620px;-webkit-text-stroke:0.1px #000;">Company B</div>
<div style="font-family:'Liberation Sans',sans-serif;font-size:12.0px;white-space:pre;position:absolute;left:245.97px;top:222.34px;line-height:20px;color:#000;-webkit-text-stroke:0.1px #000;">750.0</div>
<div style="font-family:'Liberation Sans',sans-serif;font-size:12.0px;white-space:pre;position:absolute;left:300.95px;top:222.34px;line-height:20px;color:#000;-webkit-text-stroke:0.1px #000;">4,250.0</div>
<div style="font-family:'Liberation Sans',sans-serif;font-size:12.0px;white-space:pre;position:absolute;left:371.17px;top:222.34px;line-height:20px;color:#000;-webkit-text-stroke:0.1px #000;">350.0</div>
<div style="font-family:'Liberation Sans',sans-serif;font-size:12.0px;white-space:pre;position:absolute;left:441.95px;top:222.34px;line-height:20px;color:#000;-webkit-text-stroke:0.1px #000;">4,600.0</div>
<div style="font-family:'Liberation Sans',sans-serif;font-size:12.0px;white-space:pre;position:absolute;left:549.97px;top:222.34px;line-height:20px;color:#000;-webkit-text-stroke:0.1px #000;">773.2</div>
<div style="font-family:'Liberation Sans',sans-serif;font-size:12.0px;white-space:pre;position:absolute;left:612.95px;top:222.34px;line-height:20px;color:#000;-webkit-text-stroke:0.1px #000;">1,954.0</div>
<div style="font-family:'Liberation Sans',sans-serif;font-size:12.0px;white-space:pre;position:absolute;left:702.64px;top:222.34px;line-height:20px;color:#000;-webkit-text-stroke:0.1px #000;">72.6</div>
<div style="font-family:'Liberation Sans',sans-serif;font-size:12.0px;white-space:pre;position:absolute;left:816.31px;top:222.34px;line-height:20px;color:#000;-webkit-text-stroke:0.1px #000;">5.9</div>
<div style="font-family:'Liberation Sans',sans-serif;font-size:12.0px;white-space:pre;position:absolute;left:898.31px;top:222.34px;line-height:20px;color:#000;-webkit-text-stroke:0.1px #000;">2.4</div>
<div style="font-family:'Liberation Sans',sans-serif;font-size:12.0px;white-space:pre;position:absolute;left:973.64px;top:222.34px;line-height:20px;color:#000;-webkit-text-stroke:0.1px #000;">58.5</div>
<div style="font-family:'Liberation Sans',sans-serif;font-size:12.0px;white-space:pre;position:absolute;left:27.90px;top:241.34px;line-height:20px;color:#000;letter-spacing:0.620px;-webkit-text-stroke:0.1px #000;">Company C</div>
<div style="font-family:'Liberation Sans',sans-serif;font-size:12.0px;white-space:pre;position:absolute;left:245.97px;top:241.34px;line-height:20px;color:#000;-webkit-text-stroke:0.1px #000;">600.0</div>
<div style="font-family:'Liberation Sans',sans-serif;font-size:12.0px;white-space:pre;position:absolute;left:300.95px;top:241.34px;line-height:20px;color:#000;-webkit-text-stroke:0.1px #000;">3,150.0</div>
<div style="font-family:'Liberation Sans',sans-serif;font-size:12.0px;white-space:pre;position:absolute;left:377.84px;top:241.34px;line-height:20px;color:#000;-webkit-text-stroke:0.1px #000;">50.0</div>
<div style="font-family:'Liberation Sans',sans-serif;font-size:12.0px;white-space:pre;position:absolute;left:441.95px;top:241.34px;line-height:20px;color:#000;-webkit-text-stroke:0.1px #000;">3,200.0</div>
<div style="font-family:'Liberation Sans',sans-serif;font-size:12.0px;white-space:pre;position:absolute;left:549.97px;top:241.34px;line-height:20px;color:#000;-webkit-text-stroke:0.1px #000;">283.3</div>
<div style="font-family:'Liberation Sans',sans-serif;font-size:12.0px;white-space:pre;position:absolute;left:622.97px;top:241.34px;line-height:20px;color:#000;-webkit-text-stroke:0.1px #000;">752.7</div>
<div style="font-family:'Liberation Sans',sans-serif;font-size:12.0px;white-space:pre;position:absolute;left:702.64px;top:241.34px;line-height:20px;color:#000;-webkit-text-stroke:0.1px #000;">80.7</div>
<div style="font-family:'Liberation Sans',sans-serif;font-size:12.0px;white-space:pre;position:absolute;left:810.53px;top:241.34px;line-height:20px;color:#000;-webkit-text-stroke:0.1px #000;">11.3</div>
<div style="font-family:'Liberation Sans',sans-serif;font-size:12.0px;white-space:pre;position:absolute;left:898.31px;top:241.34px;line-height:20px;color:#000;-webkit-text-stroke:0.1px #000;">4.3</div>
<div style="font-family:'Liberation Sans',sans-serif;font-size:12.0px;white-space:pre;position:absolute;left:973.64px;top:241.34px;line-height:20px;color:#000;-webkit-text-stroke:0.1px #000;">39.0</div>
<div style="font-family:'Liberation Sans',sans-serif;font-size:12.0px;white-space:pre;position:absolute;left:27.90px;top:260.34px;line-height:20px;color:#000;letter-spacing:0.620px;-webkit-text-stroke:0.1px #000;">Company D</div>
<div style="font-family:'Liberation Sans',sans-serif;font-size:12.0px;white-space:pre;position:absolute;left:245.97px;top:260.34px;line-height:20px;color:#000;-webkit-text-stroke:0.1px #000;">350.0</div>
<div style="font-family:'Liberation Sans',sans-serif;font-size:12.0px;white-space:pre;position:absolute;left:300.95px;top:260.34px;line-height:20px;color:#000;-webkit-text-stroke:0.1px #000;">3,180.0</div>
<div style="font-family:'Liberation Sans',sans-serif;font-size:12.0px;white-space:pre;position:absolute;left:377.84px;top:260.34px;line-height:20px;color:#000;-webkit-text-stroke:0.1px #000;">60.0</div>
<div style="font-family:'Liberation Sans',sans-serif;font-size:12.0px;white-space:pre;position:absolute;left:441.95px;top:260.34px;line-height:20px;color:#000;-webkit-text-stroke:0.1px #000;">3,240.0</div>
<div style="font-family:'Liberation Sans',sans-serif;font-size:12.0px;white-space:pre;position:absolute;left:549.97px;top:260.34px;line-height:20px;color:#000;-webkit-text-stroke:0.1px #000;">242.4</div>
<div style="font-family:'Liberation Sans',sans-serif;font-size:12.0px;white-space:pre;position:absolute;left:622.97px;top:260.34px;line-height:20px;color:#000;-webkit-text-stroke:0.1px #000;">712.0</div>
<div style="font-family:'Liberation Sans',sans-serif;font-size:12.0px;white-space:pre;position:absolute;left:702.64px;top:260.34px;line-height:20px;color:#000;-webkit-text-stroke:0.1px #000;">20.1</div>
<div style="font-family:'Liberation Sans',sans-serif;font-size:12.0px;white-space:pre;position:absolute;left:809.64px;top:260.34px;line-height:20px;color:#000;-webkit-text-stroke:0.1px #000;">13.4</div>
<div style="font-family:'Liberation Sans',sans-serif;font-size:12.0px;white-space:pre;position:absolute;left:898.31px;top:260.34px;line-height:20px;color:#000;-webkit-text-stroke:0.1px #000;">4.6</div>
<div style="font-family:'Liberation Sans',sans-serif;font-size:12.0px;white-space:pre;position:absolute;left:966.97px;top:260.34px;line-height:20px;color:#000;-webkit-text-stroke:0.1px #000;">158.2</div>
<div style="font-family:'Liberation Sans',sans-serif;font-size:12.0px;white-space:pre;position:absolute;left:27.90px;top:279.34px;line-height:20px;color:#000;letter-spacing:0.620px;-webkit-text-stroke:0.1px #000;">Company E</div>
<div style="font-family:'Liberation Sans',sans-serif;font-size:12.0px;white-space:pre;position:absolute;left:235.95px;top:279.34px;line-height:20px;color:#000;-webkit-text-stroke:0.1px #000;">1,500.0</div>
<div style="font-family:'Liberation Sans',sans-serif;font-size:12.0px;white-space:pre;position:absolute;left:300.95px;top:279.34px;line-height:20px;color:#000;-webkit-text-stroke:0.1px #000;">2,800.0</div>
<div style="font-family:'Liberation Sans',sans-serif;font-size:12.0px;white-space:pre;position:absolute;left:377.84px;top:279.34px;line-height:20px;color:#000;-webkit-text-stroke:0.1px #000;">15.0</div>
<div style="font-family:'Liberation Sans',sans-serif;font-size:12.0px;white-space:pre;position:absolute;left:441.95px;top:279.34px;line-height:20px;color:#000;-webkit-text-stroke:0.1px #000;">2,815.0</div>
<div style="font-family:'Liberation Sans',sans-serif;font-size:12.0px;white-space:pre;position:absolute;left:539.95px;top:279.34px;line-height:20px;color:#000;-webkit-text-stroke:0.1px #000;">4,233.7</div>
<div style="font-family:'Liberation Sans',sans-serif;font-size:12.0px;white-space:pre;position:absolute;left:622.97px;top:279.34px;line-height:20px;color:#000;-webkit-text-stroke:0.1px #000;">924.2</div>
<div style="font-family:'Liberation Sans',sans-serif;font-size:12.0px;white-space:pre;position:absolute;left:702.64px;top:279.34px;line-height:20px;color:#000;-webkit-text-stroke:0.1px #000;">70.5</div>
<div style="font-family:'Liberation Sans',sans-serif;font-size:12.0px;white-space:pre;position:absolute;left:816.31px;top:279.34px;line-height:20px;color:#000;-webkit-text-stroke:0.1px #000;">0.7</div>
<div style="font-family:'Liberation Sans',sans-serif;font-size:12.0px;white-space:pre;position:absolute;left:898.31px;top:279.34px;line-height:20px;color:#000;-webkit-text-stroke:0.1px #000;">3.0</div>
<div style="font-family:'Liberation Sans',sans-serif;font-size:12.0px;white-space:pre;position:absolute;left:973.64px;top:279.34px;line-height:20px;color:#000;-webkit-text-stroke:0.1px #000;">39.7</div>
<div style="font-family:'Liberation Sans',sans-serif;font-size:12.0px;white-space:pre;position:absolute;left:27.90px;top:298.34px;line-height:20px;color:#000;letter-spacing:0.620px;-webkit-text-stroke:0.1px #000;">Company F</div>
<div style="font-family:'Liberation Sans',sans-serif;font-size:12.0px;white-space:pre;position:absolute;left:235.95px;top:298.34px;line-height:20px;color:#000;-webkit-text-stroke:0.1px #000;">1,200.0</div>
<div style="font-family:'Liberation Sans',sans-serif;font-size:12.0px;white-space:pre;position:absolute;left:300.95px;top:298.34px;line-height:20px;color:#000;-webkit-text-stroke:0.1px #000;">3,000.0</div>
<div style="font-family:'Liberation Sans',sans-serif;font-size:12.0px;white-space:pre;position:absolute;left:377.84px;top:298.34px;line-height:20px;color:#000;-webkit-text-stroke:0.1px #000;">15.0</div>
<div style="font-family:'Liberation Sans',sans-serif;font-size:12.0px;white-space:pre;position:absolute;left:441.95px;top:298.34px;line-height:20px;color:#000;-webkit-text-stroke:0.1px #000;">3,015.0</div>
<div style="font-family:'Liberation Sans',sans-serif;font-size:12.0px;white-space:pre;position:absolute;left:549.97px;top:298.34px;line-height:20px;color:#000;-webkit-text-stroke:0.1px #000;">952.1</div>
<div style="font-family:'Liberation Sans',sans-serif;font-size:12.0px;white-space:pre;position:absolute;left:622.97px;top:298.34px;line-height:20px;color:#000;-webkit-text-stroke:0.1px #000;">516.9</div>
<div style="font-family:'Liberation Sans',sans-serif;font-size:12.0px;white-space:pre;position:absolute;left:702.64px;top:298.34px;line-height:20px;color:#000;-webkit-text-stroke:0.1px #000;">96.0</div>
<div style="font-family:'Liberation Sans',sans-serif;font-size:12.0px;white-space:pre;position:absolute;left:816.31px;top:298.34px;line-height:20px;color:#000;-webkit-text-stroke:0.1px #000;">3.2</div>
<div style="font-family:'Liberation Sans',sans-serif;font-size:12.0px;white-space:pre;position:absolute;left:898.31px;top:298.34px;line-height:20px;color:#000;-webkit-text-stroke:0.1px #000;">5.8</div>
<div style="font-family:'Liberation Sans',sans-serif;font-size:12.0px;white-space:pre;position:absolute;left:973.64px;top:298.34px;line-height:20px;color:#000;-webkit-text-stroke:0.1px #000;">31.3</div>
<div style="font-family:'Liberation Sans',sans-serif;font-size:12.0px;white-space:pre;position:absolute;left:27.90px;top:317.34px;line-height:20px;color:#000;letter-spacing:0.620px;-webkit-text-stroke:0.1px #000;">Company G</div>
<div style="font-family:'Liberation Sans',sans-serif;font-size:12.0px;white-space:pre;position:absolute;left:245.97px;top:317.34px;line-height:20px;color:#000;-webkit-text-stroke:0.1px #000;">352.0</div>
<div style="font-family:'Liberation Sans',sans-serif;font-size:12.0px;white-space:pre;position:absolute;left:300.95px;top:317.34px;line-height:20px;color:#000;-webkit-text-stroke:0.1px #000;">2,250.0</div>
<div style="font-family:'Liberation Sans',sans-serif;font-size:12.0px;white-space:pre;position:absolute;left:371.17px;top:317.34px;line-height:20px;color:#000;-webkit-text-stroke:0.1px #000;">160.0</div>
<div style="font-family:'Liberation Sans',sans-serif;font-size:12.0px;white-space:pre;position:absolute;left:441.95px;top:317.34px;line-height:20px;color:#000;-webkit-text-stroke:0.1px #000;">2,410.0</div>
<div style="font-family:'Liberation Sans',sans-serif;font-size:12.0px;white-space:pre;position:absolute;left:549.97px;top:317.34px;line-height:20px;color:#000;-webkit-text-stroke:0.1px #000;">455.8</div>
<div style="font-family:'Liberation Sans',sans-serif;font-size:12.0px;white-space:pre;position:absolute;left:622.97px;top:317.34px;line-height:20px;color:#000;-webkit-text-stroke:0.1px #000;">223.2</div>
<div style="font-family:'Liberation Sans',sans-serif;font-size:12.0px;white-space:pre;position:absolute;left:696.86px;top:317.34px;line-height:20px;color:#000;-webkit-text-stroke:0.1px #000;">112.0</div>
<div style="font-family:'Liberation Sans',sans-serif;font-size:12.0px;white-space:pre;position:absolute;left:816.31px;top:317.34px;line-height:20px;color:#000;-webkit-text-stroke:0.1px #000;">5.3</div>
<div style="font-family:'Liberation Sans',sans-serif;font-size:12.0px;white-space:pre;position:absolute;left:891.64px;top:317.34px;line-height:20px;color:#000;-webkit-text-stroke:0.1px #000;">10.8</div>
<div style="font-family:'Liberation Sans',sans-serif;font-size:12.0px;white-space:pre;position:absolute;left:973.64px;top:317.34px;line-height:20px;color:#000;-webkit-text-stroke:0.1px #000;">20.1</div>
<div style="font-family:'Liberation Sans',sans-serif;font-size:12.0px;white-space:pre;position:absolute;left:27.90px;top:336.34px;line-height:20px;color:#000;letter-spacing:0.620px;-webkit-text-stroke:0.1px #000;">Company H</div>
<div style="font-family:'Liberation Sans',sans-serif;font-size:12.0px;white-space:pre;position:absolute;left:245.97px;top:336.34px;line-height:20px;color:#000;-webkit-text-stroke:0.1px #000;">285.0</div>
<div style="font-family:'Liberation Sans',sans-serif;font-size:12.0px;white-space:pre;position:absolute;left:300.95px;top:336.34px;line-height:20px;color:#000;-webkit-text-stroke:0.1px #000;">2,365.0</div>
<div style="font-family:'Liberation Sans',sans-serif;font-size:12.0px;white-space:pre;position:absolute;left:377.84px;top:336.34px;line-height:20px;color:#000;-webkit-text-stroke:0.1px #000;">50.0</div>
<div style="font-family:'Liberation Sans',sans-serif;font-size:12.0px;white-space:pre;position:absolute;left:441.95px;top:336.34px;line-height:20px;color:#000;-webkit-text-stroke:0.1px #000;">2,415.0</div>
<div style="font-family:'Liberation Sans',sans-serif;font-size:12.0px;white-space:pre;position:absolute;left:539.95px;top:336.34px;line-height:20px;color:#000;-webkit-text-stroke:0.1px #000;">2,208.8</div>
<div style="font-family:'Liberation Sans',sans-serif;font-size:12.0px;white-space:pre;position:absolute;left:622.97px;top:336.34px;line-height:20px;color:#000;-webkit-text-stroke:0.1px #000;">342.0</div>
<div style="font-family:'Liberation Sans',sans-serif;font-size:12.0px;white-space:pre;position:absolute;left:702.64px;top:336.34px;line-height:20px;color:#000;-webkit-text-stroke:0.1px #000;">92.8</div>
<div style="font-family:'Liberation Sans',sans-serif;font-size:12.0px;white-space:pre;position:absolute;left:816.31px;top:336.34px;line-height:20px;color:#000;-webkit-text-stroke:0.1px #000;">1.1</div>
<div style="font-family:'Liberation Sans',sans-serif;font-size:12.0px;white-space:pre;position:absolute;left:898.31px;top:336.34px;line-height:20px;color:#000;-webkit-text-stroke:0.1px #000;">7.1</div>
<div style="font-family:'Liberation Sans',sans-serif;font-size:12.0px;white-space:pre;position:absolute;left:973.64px;top:336.34px;line-height:20px;color:#000;-webkit-text-stroke:0.1px #000;">25.5</div>
<div style="font-family:'Liberation Sans',sans-serif;font-size:12.0px;white-space:pre;position:absolute;left:27.90px;top:355.34px;line-height:20px;color:#000;letter-spacing:0.620px;-webkit-text-stroke:0.1px #000;">Company I</div>
<div style="font-family:'Liberation Sans',sans-serif;font-size:12.0px;white-space:pre;position:absolute;left:235.95px;top:355.34px;line-height:20px;color:#000;-webkit-text-stroke:0.1px #000;">1,650.0</div>
<div style="font-family:'Liberation Sans',sans-serif;font-size:12.0px;white-space:pre;position:absolute;left:300.95px;top:355.34px;line-height:20px;color:#000;-webkit-text-stroke:0.1px #000;">2,185.0</div>
<div style="font-family:'Liberation Sans',sans-serif;font-size:12.0px;white-space:pre;position:absolute;left:371.17px;top:355.34px;line-height:20px;color:#000;-webkit-text-stroke:0.1px #000;">800.0</div>
<div style="font-family:'Liberation Sans',sans-serif;font-size:12.0px;white-space:pre;position:absolute;left:441.95px;top:355.34px;line-height:20px;color:#000;-webkit-text-stroke:0.1px #000;">2,985.0</div>
<div style="font-family:'Liberation Sans',sans-serif;font-size:12.0px;white-space:pre;position:absolute;left:539.95px;top:355.34px;line-height:20px;color:#000;-webkit-text-stroke:0.1px #000;">1,845.6</div>
<div style="font-family:'Liberation Sans',sans-serif;font-size:12.0px;white-space:pre;position:absolute;left:622.97px;top:355.34px;line-height:20px;color:#000;-webkit-text-stroke:0.1px #000;">578.1</div>
<div style="font-family:'Liberation Sans',sans-serif;font-size:12.0px;white-space:pre;position:absolute;left:702.64px;top:355.34px;line-height:20px;color:#000;-webkit-text-stroke:0.1px #000;">91.4</div>
<div style="font-family:'Liberation Sans',sans-serif;font-size:12.0px;white-space:pre;position:absolute;left:816.31px;top:355.34px;line-height:20px;color:#000;-webkit-text-stroke:0.1px #000;">1.6</div>
<div style="font-family:'Liberation Sans',sans-serif;font-size:12.0px;white-space:pre;position:absolute;left:898.31px;top:355.34px;line-height:20px;color:#000;-webkit-text-stroke:0.1px #000;">5.2</div>
<div style="font-family:'Liberation Sans',sans-serif;font-size:12.0px;white-space:pre;position:absolute;left:973.64px;top:355.34px;line-height:20px;color:#000;-webkit-text-stroke:0.1px #000;">23.9</div>
<div style="font-family:'Liberation Sans',sans-serif;font-size:12.0px;white-space:pre;position:absolute;left:27.90px;top:393.34px;line-height:20px;color:#000;letter-spacing:0.728px;-webkit-text-stroke:0.1px #000;">High</div>
<div style="font-family:'Liberation Sans',sans-serif;font-size:12.0px;white-space:pre;position:absolute;left:809.64px;top:393.34px;line-height:20px;color:#000;-webkit-text-stroke:0.1px #000;">13.4</div>
<div style="font-family:'Liberation Sans',sans-serif;font-size:12.0px;white-space:pre;position:absolute;left:891.64px;top:393.34px;line-height:20px;color:#000;-webkit-text-stroke:0.1px #000;">10.8</div>
<div style="font-family:'Liberation Sans',sans-serif;font-size:12.0px;white-space:pre;position:absolute;left:966.97px;top:393.34px;line-height:20px;color:#000;-webkit-text-stroke:0.1px #000;">158.2</div>
<div style="font-family:'Liberation Sans',sans-serif;font-size:12.0px;white-space:pre;position:absolute;left:27.90px;top:412.34px;line-height:20px;color:#000;letter-spacing:0.668px;-webkit-text-stroke:0.1px #000;">Upper Quartile</div>
<div style="font-family:'Liberation Sans',sans-serif;font-size:12.0px;white-space:pre;position:absolute;left:816.31px;top:412.34px;line-height:20px;color:#000;-webkit-text-stroke:0.1px #000;">5.9</div>
<div style="font-family:'Liberation Sans',sans-serif;font-size:12.0px;white-space:pre;position:absolute;left:898.31px;top:412.34px;line-height:20px;color:#000;-webkit-text-stroke:0.1px #000;">6.7</div>
<div style="font-family:'Liberation Sans',sans-serif;font-size:12.0px;white-space:pre;position:absolute;left:973.64px;top:412.34px;line-height:20px;color:#000;-webkit-text-stroke:0.1px #000;">39.7</div>
<div style="font-family:'Liberation Sans',sans-serif;font-size:12.0px;white-space:pre;position:absolute;left:27.90px;top:431.34px;line-height:20px;color:#000;letter-spacing:0.831px;-webkit-text-stroke:0.42px #000;">Average</div>
<div style="font-family:'Liberation Sans',sans-serif;font-size:12.0px;white-space:pre;position:absolute;left:816.75px;top:431.34px;line-height:20px;color:#000;transform:scaleX(0.9800);transform-origin:0 0;-webkit-text-stroke:0.42px #000;">4.3</div>
<div style="font-family:'Liberation Sans',sans-serif;font-size:12.0px;white-space:pre;position:absolute;left:898.75px;top:431.34px;line-height:20px;color:#000;transform:scaleX(0.9800);transform-origin:0 0;-webkit-text-stroke:0.42px #000;">5.1</div>
<div style="font-family:'Liberation Sans',sans-serif;font-size:12.0px;white-space:pre;position:absolute;left:974.21px;top:431.34px;line-height:20px;color:#000;transform:scaleX(0.9800);transform-origin:0 0;-webkit-text-stroke:0.42px #000;">45.0</div>
<div style="font-family:'Liberation Sans',sans-serif;font-size:12.0px;white-space:pre;position:absolute;left:27.90px;top:450.34px;line-height:20px;color:#000;letter-spacing:0.907px;-webkit-text-stroke:0.42px #000;">Median</div>
<div style="font-family:'Liberation Sans',sans-serif;font-size:12.0px;white-space:pre;position:absolute;left:816.75px;top:450.34px;line-height:20px;color:#000;transform:scaleX(0.9800);transform-origin:0 0;-webkit-text-stroke:0.42px #000;">2.4</div>
<div style="font-family:'Liberation Sans',sans-serif;font-size:12.0px;white-space:pre;position:absolute;left:898.75px;top:450.34px;line-height:20px;color:#000;transform:scaleX(0.9800);transform-origin:0 0;-webkit-text-stroke:0.42px #000;">4.9</div>
<div style="font-family:'Liberation Sans',sans-serif;font-size:12.0px;white-space:pre;position:absolute;left:974.21px;top:450.34px;line-height:20px;color:#000;transform:scaleX(0.9800);transform-origin:0 0;-webkit-text-stroke:0.42px #000;">34.4</div>
<div style="font-family:'Liberation Sans',sans-serif;font-size:12.0px;white-space:pre;position:absolute;left:27.90px;top:469.34px;line-height:20px;color:#000;letter-spacing:0.518px;-webkit-text-stroke:0.1px #000;">Lower Quartile</div>
<div style="font-family:'Liberation Sans',sans-serif;font-size:12.0px;white-space:pre;position:absolute;left:816.31px;top:469.34px;line-height:20px;color:#000;-webkit-text-stroke:0.1px #000;">0.7</div>
<div style="font-family:'Liberation Sans',sans-serif;font-size:12.0px;white-space:pre;position:absolute;left:898.31px;top:469.34px;line-height:20px;color:#000;-webkit-text-stroke:0.1px #000;">3.0</div>
<div style="font-family:'Liberation Sans',sans-serif;font-size:12.0px;white-space:pre;position:absolute;left:973.64px;top:469.34px;line-height:20px;color:#000;-webkit-text-stroke:0.1px #000;">23.9</div>
<div style="font-family:'Liberation Sans',sans-serif;font-size:12.0px;white-space:pre;position:absolute;left:27.90px;top:488.34px;line-height:20px;color:#000;letter-spacing:0.695px;-webkit-text-stroke:0.1px #000;">Low</div>
<div style="font-family:'Liberation Sans',sans-serif;font-size:12.0px;white-space:pre;position:absolute;left:816.31px;top:488.34px;line-height:20px;color:#000;-webkit-text-stroke:0.1px #000;">0.4</div>
<div style="font-family:'Liberation Sans',sans-serif;font-size:12.0px;white-space:pre;position:absolute;left:898.31px;top:488.34px;line-height:20px;color:#000;-webkit-text-stroke:0.1px #000;">1.7</div>
<div style="font-family:'Liberation Sans',sans-serif;font-size:12.0px;white-space:pre;position:absolute;left:973.64px;top:488.34px;line-height:20px;color:#000;-webkit-text-stroke:0.1px #000;">16.0</div>
<div style="font-family:'Liberation Sans',sans-serif;font-size:12.0px;white-space:pre;position:absolute;left:27.90px;top:526.34px;line-height:20px;color:#000;letter-spacing:0.706px;-webkit-text-stroke:0.42px #000;">X COMPANY LTD Comparable Valuation</div>
<div style="font-family:'Liberation Sans',sans-serif;font-size:12.0px;white-space:pre;position:absolute;left:756.60px;top:526.34px;line-height:20px;color:#000;letter-spacing:0.507px;-webkit-text-stroke:0.42px #000;">EV/ Revenue</div>
<div style="font-family:'Liberation Sans',sans-serif;font-size:12.0px;white-space:pre;position:absolute;left:844.88px;top:526.34px;line-height:20px;color:#000;letter-spacing:0.068px;-webkit-text-stroke:0.42px #000;">EV/EBITDA</div>
<div style="font-family:'Liberation Sans',sans-serif;font-size:12.0px;white-space:pre;position:absolute;left:948.68px;top:526.34px;line-height:20px;color:#000;letter-spacing:0.152px;-webkit-text-stroke:0.42px #000;">P/E</div>
<div style="font-family:'Liberation Sans',sans-serif;font-size:12.0px;white-space:pre;position:absolute;left:27.90px;top:564.34px;line-height:20px;color:#000;letter-spacing:-0.053px;-webkit-text-stroke:0.1px #000;">Revenue, EBITDA, P/E</div>
<div style="font-family:'Liberation Sans',sans-serif;font-size:12.0px;white-space:pre;position:absolute;left:781.98px;top:564.34px;line-height:20px;color:#000;-webkit-text-stroke:0.1px #000;">5,250.00</div>
<div style="font-family:'Liberation Sans',sans-serif;font-size:12.0px;white-space:pre;position:absolute;left:863.98px;top:564.34px;line-height:20px;color:#000;-webkit-text-stroke:0.1px #000;">1,200.00</div>
<div style="font-family:'Liberation Sans',sans-serif;font-size:12.0px;white-space:pre;position:absolute;left:956.00px;top:564.34px;line-height:20px;color:#000;-webkit-text-stroke:0.1px #000;">500.00</div>
<div style="font-family:'Liberation Sans',sans-serif;font-size:12.0px;white-space:pre;position:absolute;left:27.90px;top:583.34px;line-height:20px;color:#000;letter-spacing:0.723px;-webkit-text-stroke:0.42px #000;">Implied Enterprise Value</div>
<div style="font-family:'Liberation Sans',sans-serif;font-size:12.0px;white-space:pre;position:absolute;left:787.78px;top:583.34px;line-height:20px;color:#000;transform:scaleX(0.9700);transform-origin:0 0;-webkit-text-stroke:0.42px #000;">12,558.1</div>
<div style="font-family:'Liberation Sans',sans-serif;font-size:12.0px;white-space:pre;position:absolute;left:876.25px;top:583.34px;line-height:20px;color:#000;transform:scaleX(0.9700);transform-origin:0 0;-webkit-text-stroke:0.42px #000;">5,828.4</div>
<div style="font-family:'Liberation Sans',sans-serif;font-size:12.0px;white-space:pre;position:absolute;left:951.78px;top:583.34px;line-height:20px;color:#000;transform:scaleX(0.9700);transform-origin:0 0;-webkit-text-stroke:0.42px #000;">17,221.1</div>
<div style="font-family:'Liberation Sans',sans-serif;font-size:12.0px;white-space:pre;position:absolute;left:27.90px;top:602.34px;line-height:20px;color:#000;letter-spacing:0.768px;-webkit-text-stroke:0.1px #000;">Net Debt</div>
<div style="font-family:'Liberation Sans',sans-serif;font-size:12.0px;white-space:pre;position:absolute;left:802.97px;top:602.34px;line-height:20px;color:#000;-webkit-text-stroke:0.1px #000;">150.0</div>
<div style="font-family:'Liberation Sans',sans-serif;font-size:12.0px;white-space:pre;position:absolute;left:884.97px;top:602.34px;line-height:20px;color:#000;-webkit-text-stroke:0.1px #000;">150.0</div>
<div style="font-family:'Liberation Sans',sans-serif;font-size:12.0px;white-space:pre;position:absolute;left:966.97px;top:602.34px;line-height:20px;color:#000;-webkit-text-stroke:0.1px #000;">150.0</div>
<div style="font-family:'Liberation Sans',sans-serif;font-size:12.0px;white-space:pre;position:absolute;left:27.90px;top:621.34px;line-height:20px;color:#fff;letter-spacing:0.868px;-webkit-text-stroke:0.45px #fff;">Equity valuation pre different multiple</div>
<div style="font-family:'Liberation Sans',sans-serif;font-size:12.0px;white-space:pre;position:absolute;left:788.35px;top:621.34px;line-height:20px;color:#fff;transform:scaleX(0.9600);transform-origin:0 0;-webkit-text-stroke:0.45px #fff;">12,408.1</div>
<div style="font-family:'Liberation Sans',sans-serif;font-size:12.0px;white-space:pre;position:absolute;left:876.75px;top:621.34px;line-height:20px;color:#fff;transform:scaleX(0.9600);transform-origin:0 0;-webkit-text-stroke:0.45px #fff;">5,678.4</div>
<div style="font-family:'Liberation Sans',sans-serif;font-size:12.0px;white-space:pre;position:absolute;left:952.35px;top:621.34px;line-height:20px;color:#fff;transform:scaleX(0.9600);transform-origin:0 0;-webkit-text-stroke:0.45px #fff;">17,071.1</div>
</div></body></html>
